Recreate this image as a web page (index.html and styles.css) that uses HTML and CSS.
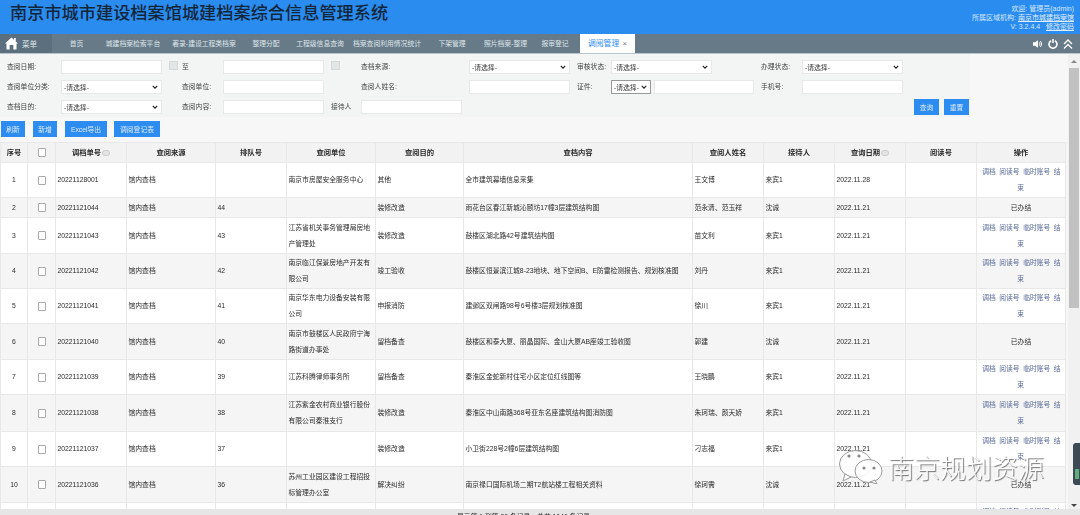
FILE: index.html
```html
<!DOCTYPE html>
<html lang="zh-CN">

<head>
    <meta charset="UTF-8">
    <title>南京市城市建设档案馆城建档案综合信息管理系统</title>
    <link rel="stylesheet" href="styles.css">
</head>

<body>
    <div class="app">
        <!-- Header -->
        <header class="header">
            <h1 class="title">南京市城市建设档案馆城建档案综合信息管理系统</h1>
            <div class="user-info">
                <div>欢迎: 管理员(admin)</div>
                <div>所属区域机构: <a href="#">南京市城建档案馆</a></div>
                <div>V: 3.2.4.4 &nbsp; <a href="#">修改密码</a></div>
            </div>
        </header>

        <!-- Navigation Bar -->
        <nav class="navbar">
            <div class="menu-btn">
                <svg class="home-icon" viewBox="0 0 14 14">
                    <path d="M7 0.5 L0 7 L1.6 7 L1.6 13.5 L5 13.5 L5 8.5 L9 8.5 L9 13.5 L12.4 13.5 L12.4 7 L14 7 L11.6 4.8 L11.6 1.2 L9.8 1.2 L9.8 3.1 Z" fill="#fff" />
                </svg>
                <span>菜单</span>
            </div>
            <ul class="tabs">
                <li>首页</li>
                <li>城建档案检索平台</li>
                <li>著录-建设工程类档案</li>
                <li>整理分配</li>
                <li>工程级信息查询</li>
                <li>档案查阅利用情况统计</li>
                <li>下架管理</li>
                <li>照片档案-整理</li>
                <li>报审登记</li>
                <li class="active">调阅管理 <span class="close">×</span></li>
            </ul>
            <div class="nav-icons">
                <svg viewBox="0 0 12 10">
                    <path d="M0 3 L2.5 3 L6 0.5 L6 9.5 L2.5 7 L0 7 Z" fill="#fff" />
                    <path d="M7.5 3 Q9.5 5 7.5 7 M9 1.5 Q12 5 9 8.5" fill="none" stroke="#fff" stroke-width="1.2" />
                </svg>
                <svg viewBox="0 0 10 10">
                    <path d="M3 1.8 A4 4 0 1 0 7 1.8" fill="none" stroke="#fff" stroke-width="1.6" />
                    <path d="M5 0 L5 4" stroke="#fff" stroke-width="1.6" />
                </svg>
                <svg viewBox="0 0 10 10">
                    <path d="M1 5 L5 1 L9 5 M1 9.5 L5 5.5 L9 9.5" fill="none" stroke="#fff" stroke-width="1.3" />
                </svg>
            </div>
        </nav>

        <div class="body-row">
            <div class="content">
                <!-- Search Form -->
                <form class="search-panel">
                    <div class="form-row">
                        <label class="lbl-first">查阅日期:</label>
                        <input type="text">
                        <span class="cal-slot"><i class="cal-icon"></i></span>
                        <label class="lbl-mid">至</label>
                        <input type="text">
                        <span class="cal-slot wide"><i class="cal-icon"></i></span>
                        <label class="lbl-wide">查档来源:</label>
                        <select><option>-请选择-</option></select>
                        <label class="lbl-mid pad">审核状态:</label>
                        <select><option>-请选择-</option></select>
                        <label class="lbl-last">办理状态:</label>
                        <select><option>-请选择-</option></select>
                    </div>

                    <div class="form-row">
                        <label class="lbl-first">查阅单位分类:</label>
                        <select><option>-请选择-</option></select>
                        <span class="cal-slot"></span>
                        <label class="lbl-mid">查阅单位:</label>
                        <input type="text">
                        <span class="cal-slot wide"></span>
                        <label class="lbl-wide">查阅人姓名:</label>
                        <input type="text">
                        <label class="lbl-mid pad">证件:</label>
                        <div class="id-field">
                            <select class="id-type"><option>-请选择-</option></select>
                            <input type="text">
                        </div>
                        <label class="lbl-phone">手机号:</label>
                        <input type="text">
                    </div>

                    <div class="form-row">
                        <label class="lbl-first">查档目的:</label>
                        <select><option>-请选择-</option></select>
                        <span class="cal-slot"></span>
                        <label class="lbl-mid">查阅内容:</label>
                        <input type="text">
                        <label class="lbl-reception">接待人</label>
                        <input type="text">
                        <div class="search-btns">
                            <button type="button" class="btn">查询</button>
                            <button type="button" class="btn">重置</button>
                        </div>
                    </div>
                </form>

                <div class="toolbar">
                    <button type="button" class="btn">刷新</button>
                    <button type="button" class="btn">新增</button>
                    <button type="button" class="btn">Excel导出</button>
                    <button type="button" class="btn">调阅登记表</button>
                </div>

                <!-- Data Table -->
                <table class="data-table">
                    <colgroup>
                        <col class="w27"><col class="w28"><col class="w71"><col class="w89"><col class="w71"><col class="w89"><col class="w88"><col class="w229"><col class="w71"><col class="w71"><col class="w71"><col class="w71"><col class="w89">
                    </colgroup>
                    <thead>
                        <tr>
                            <th>序号</th>
                            <th><input type="checkbox"></th>
                            <th>调档单号<span class="sort"></span></th>
                            <th>查阅来源</th>
                            <th>排队号</th>
                            <th>查阅单位</th>
                            <th>查阅目的</th>
                            <th>查档内容</th>
                            <th>查阅人姓名</th>
                            <th>接待人</th>
                            <th>查询日期<span class="sort"></span></th>
                            <th>阅读号</th>
                            <th>操作</th>
                        </tr>
                    </thead>
                    <tbody>
                        <tr class="h35">
                            <td class="num">1</td><td class="num"><input type="checkbox"></td><td>20221128001</td><td>馆内查档</td><td></td><td>南京市房屋安全服务中心</td><td>其他</td><td>全市建筑幕墙信息采集</td><td>王文博</td><td>来宾1</td><td>2022.11.28</td><td></td>
                            <td class="ops"><a href="#">调档</a> <a href="#">阅读号</a> <a href="#">临时账号</a> <a href="#">结束</a></td>
                        </tr>
                        <tr class="h20">
                            <td class="num">2</td><td class="num"><input type="checkbox"></td><td>20221121044</td><td>馆内查档</td><td>44</td><td></td><td>装修改造</td><td>雨花台区春江新城沁颐坊17幢3层建筑结构图</td><td>范永清、范玉祥</td><td>沈诚</td><td>2022.11.21</td><td></td>
                            <td class="ops">已办结</td>
                        </tr>
                        <tr class="h36">
                            <td class="num">3</td><td class="num"><input type="checkbox"></td><td>20221121043</td><td>馆内查档</td><td>43</td><td>江苏省机关事务管理局房地产管理处</td><td>装修改造</td><td>鼓楼区湖北路42号建筑结构图</td><td>苗文利</td><td>来宾1</td><td>2022.11.21</td><td></td>
                            <td class="ops"><a href="#">调档</a> <a href="#">阅读号</a> <a href="#">临时账号</a> <a href="#">结束</a></td>
                        </tr>
                        <tr class="h35">
                            <td class="num">4</td><td class="num"><input type="checkbox"></td><td>20221121042</td><td>馆内查档</td><td>42</td><td>南京临江保景房地产开发有限公司</td><td>竣工验收</td><td>鼓楼区恒景滨江城8-23地块、地下空间B、E防雷检测报告、规划核准图</td><td>刘丹</td><td>来宾1</td><td>2022.11.21</td><td></td>
                            <td class="ops"><a href="#">调档</a> <a href="#">阅读号</a> <a href="#">临时账号</a> <a href="#">结束</a></td>
                        </tr>
                        <tr class="h35">
                            <td class="num">5</td><td class="num"><input type="checkbox"></td><td>20221121041</td><td>馆内查档</td><td>41</td><td>南京华东电力设备安装有限公司</td><td>申报消防</td><td>建邺区双闸路98号6号楼3层规划核准图</td><td>徐川</td><td>来宾1</td><td>2022.11.21</td><td></td>
                            <td class="ops"><a href="#">调档</a> <a href="#">阅读号</a> <a href="#">临时账号</a> <a href="#">结束</a></td>
                        </tr>
                        <tr class="h36">
                            <td class="num">6</td><td class="num"><input type="checkbox"></td><td>20221121040</td><td>馆内查档</td><td>40</td><td>南京市鼓楼区人民政府宁海路街道办事处</td><td>留档备查</td><td>鼓楼区和泰大厦、丽晶国际、金山大厦AB座竣工验收图</td><td>郭建</td><td>沈诚</td><td>2022.11.21</td><td></td>
                            <td class="ops">已办结</td>
                        </tr>
                        <tr class="h35">
                            <td class="num">7</td><td class="num"><input type="checkbox"></td><td>20221121039</td><td>馆内查档</td><td>39</td><td>江苏科腾律师事务所</td><td>留档备查</td><td>秦淮区金蛇新村住宅小区定位红线图等</td><td>王晓鹏</td><td>来宾1</td><td>2022.11.21</td><td></td>
                            <td class="ops"><a href="#">调档</a> <a href="#">阅读号</a> <a href="#">临时账号</a> <a href="#">结束</a></td>
                        </tr>
                        <tr class="h37">
                            <td class="num">8</td><td class="num"><input type="checkbox"></td><td>20221121038</td><td>馆内查档</td><td>38</td><td>江苏紫金农村商业银行股份有限公司秦淮支行</td><td>装修改造</td><td>秦淮区中山南路368号亚东名座建筑结构图消防图</td><td>朱珂瑞、颜天娇</td><td>来宾1</td><td>2022.11.21</td><td></td>
                            <td class="ops"><a href="#">调档</a> <a href="#">阅读号</a> <a href="#">临时账号</a> <a href="#">结束</a></td>
                        </tr>
                        <tr class="h35">
                            <td class="num">9</td><td class="num"><input type="checkbox"></td><td>20221121037</td><td>馆内查档</td><td>37</td><td></td><td>装修改造</td><td>小卫街228号2幢6层建筑结构图</td><td>刁志福</td><td>来宾1</td><td>2022.11.21</td><td></td>
                            <td class="ops"><a href="#">调档</a> <a href="#">阅读号</a> <a href="#">临时账号</a> <a href="#">结束</a></td>
                        </tr>
                        <tr class="h36">
                            <td class="num">10</td><td class="num"><input type="checkbox"></td><td>20221121036</td><td>馆内查档</td><td>36</td><td>苏州工业园区建设工程招投标管理办公室</td><td>解决纠纷</td><td>南京禄口国际机场二期T2航站楼工程相关资料</td><td>徐珂需</td><td>沈诚</td><td>2022.11.21</td><td></td>
                            <td class="ops">已办结</td>
                        </tr>
                        <tr class="h35">
                            <td class="num">11</td><td class="num"><input type="checkbox"></td><td>20221121035</td><td>馆内查档</td><td>35</td><td></td><td>装修改造</td><td>秦淮区中山南路368号建筑结构图、消防图、规划核准图及相关资料</td><td>李明</td><td>来宾1</td><td>2022.11.21</td><td></td>
                            <td class="ops"><a href="#">调档</a> <a href="#">阅读号</a> <a href="#">临时账号</a> <a href="#">结束</a></td>
                        </tr>
                    </tbody>
                </table>
            </div>

            <!-- Scrollbar -->
            <div class="scrollbar">
                <span class="arrow-up"></span>
                <span class="thumb"></span>
                <span class="arrow-down"></span>
            </div>
        </div>

        <div class="footer">显示第 1 到第 20 条记录，总共 1046 条记录</div>
    </div>

    <!-- Overlays -->
    <div class="side-widget"><span></span></div>
    <div class="watermark">
        <svg class="wechat" viewBox="0 0 44 34">
            <ellipse cx="16.5" cy="14" rx="16" ry="13.5" fill="#fff" fill-opacity="0.8" stroke="#999" />
            <path d="M6 24 L4 31 L12 27 Z" fill="#fff" stroke="#999" />
            <ellipse cx="29.5" cy="21" rx="13.5" ry="11.5" fill="#fff" fill-opacity="0.9" stroke="#999" />
            <path d="M36 30 L38 34 L31 32 Z" fill="#fff" stroke="#999" />
            <circle cx="10" cy="6" r="1.6" fill="#888" />
            <circle cx="20" cy="6" r="1.6" fill="#888" />
            <circle cx="25" cy="18" r="1.6" fill="#888" />
            <circle cx="35" cy="18" r="1.6" fill="#888" />
        </svg>
        <span class="wm-text">南京规划资源</span>
    </div>
</body>

</html>
```

FILE: styles.css
```css
* {
    box-sizing: border-box;
}

html,
body {
    margin: 0;
    padding: 0;
    height: 100%;
    overflow: hidden;
}

body {
    font-family: "Liberation Sans", "Noto Sans CJK SC", sans-serif;
    font-size: 6.8px;
    color: #2a2a2a;
    background: #f7f7f7;
}

.app {
    display: flex;
    flex-direction: column;
    height: 100%;
    filter: blur(0.3px);
}

/* Header */
.header {
    flex: 0 0 34px;
    display: flex;
    justify-content: space-between;
    background-color: #2b8cf0;
    padding: 0 6px 0 10px;
}

.title {
    margin: 0;
    font-size: 17.2px;
    line-height: 26px;
    font-weight: 500;
    color: #12263a;
}

.user-info {
    padding-top: 4px;
    text-align: right;
    line-height: 9px;
    font-size: 7px;
    color: #d5e8fb;
}

.user-info a {
    color: #e4f0fc;
}

/* Navigation Bar */
.navbar {
    flex: 0 0 20px;
    display: flex;
    background-color: #677a88;
    border-bottom: 1px solid #b9c4cc;
    color: #dfe6ea;
}

.menu-btn {
    width: 52px;
    display: flex;
    align-items: center;
    gap: 4px;
    padding-left: 5px;
    background-color: #5c6f7e;
    font-size: 7.5px;
}

.home-icon {
    width: 13px;
    height: 13px;
}

.tabs {
    list-style: none;
    margin: 0;
    padding: 0;
    display: grid;
    grid-template-columns: 49px 64px 78px 46px 62px 72px 58px 49px 50px 55px;
}

.tabs li {
    text-align: center;
    line-height: 19px;
    white-space: nowrap;
}

.tabs li.active {
    background-color: #fff;
    color: #2b8cf0;
    font-size: 7.8px;
}

.tabs .close {
    color: #777;
    margin-left: 1px;
}

.nav-icons {
    margin-left: auto;
    display: flex;
    align-items: center;
    gap: 5px;
    padding-right: 7px;
}

.nav-icons svg {
    width: 10px;
    height: 10px;
}

/* Main Area */
.body-row {
    flex: 1;
    min-height: 0;
    display: flex;
}

.content {
    flex: 1;
    min-width: 0;
    overflow: hidden;
}

/* Search Form */
.search-panel {
    width: 970px;
    height: 63px;
    background-color: #f3f5f5;
    padding-top: 6px;
    display: flex;
    flex-direction: column;
    gap: 6px;
}

.form-row {
    display: flex;
    height: 14px;
}

.form-row label {
    flex: none;
    line-height: 14px;
    white-space: nowrap;
    color: #444;
}

.lbl-first {
    width: 61px;
    padding-left: 7px;
}

.lbl-mid {
    width: 41px;
}

.lbl-mid.pad {
    padding-left: 7px;
}

.lbl-wide {
    width: 108px;
}

.lbl-last {
    width: 90px;
    padding-left: 49px;
}

.lbl-phone {
    width: 41px;
}

.lbl-reception {
    width: 37px;
    padding-left: 7px;
}

.form-row input,
.form-row select {
    flex: 0 0 101px;
    width: 101px;
    height: 14px;
    margin: 0;
    padding: 0 0 0 2px;
    font: inherit;
    color: #333;
    background-color: #fff;
    border: 1px solid #e8e8e8;
    border-radius: 0;
}

.form-row select {
    appearance: none;
    background-image: url("data:image/svg+xml,%3Csvg xmlns='http://www.w3.org/2000/svg' viewBox='0 0 8 5'%3E%3Cpath d='M1 1 L4 4 L7 1' fill='none' stroke='%23222' stroke-width='1.6'/%3E%3C/svg%3E");
    background-repeat: no-repeat;
    background-position: right 3px center;
    background-size: 6px 4px;
}

.id-field {
    flex: 0 0 150px;
    display: flex;
    gap: 3px;
}

.form-row .id-type {
    flex: 0 0 40px;
    width: 40px;
    border-color: #999;
}

.form-row .id-field input {
    flex: 0 0 100px;
    width: 100px;
}

.cal-slot {
    flex: 0 0 20px;
}

.cal-slot.wide {
    flex-basis: 37px;
}

.cal-icon {
    display: block;
    width: 9px;
    height: 9px;
    margin: 1px 0 0 7px;
    background-color: #e3e6e6;
    border: 1px solid #d6d9d9;
}

.search-btns {
    margin-left: auto;
    display: flex;
    gap: 5px;
    height: 16px;
    margin-top: -1px;
    padding-right: 1px;
}

.btn {
    flex: none;
    height: 16px;
    padding: 0;
    font: inherit;
    color: #dcebfb;
    background-color: #2d8cf0;
    border: 0;
    white-space: nowrap;
}

.search-btns .btn {
    width: 25px;
}

/* Toolbar */
.toolbar {
    display: flex;
    gap: 8px;
    padding: 4px 0 5px 1px;
}

.toolbar .btn:nth-child(1),
.toolbar .btn:nth-child(2) {
    width: 24px;
}

.toolbar .btn:nth-child(3) {
    width: 42px;
}

.toolbar .btn:nth-child(4) {
    width: 46px;
    margin-left: -1px;
}

/* Data Table */
.data-table {
    width: 1065px;
    table-layout: fixed;
    border-collapse: collapse;
    background-color: #fff;
}

.w27 { width: 27px; }
.w28 { width: 28px; }
.w71 { width: 71px; }
.w88 { width: 88px; }
.w89 { width: 89px; }
.w229 { width: 229px; }

.data-table th,
.data-table td {
    border: 1px solid #e8e8e8;
    padding: 0 1.5px;
    line-height: 16px;
    font-weight: normal;
    overflow: hidden;
}

.data-table th {
    height: 20px;
    background-color: #f2f2f2;
    font-weight: bold;
    font-size: 7.3px;
    text-align: center;
}

.data-table tbody tr:nth-child(even) {
    background-color: #f5f5f5;
}

.h20 { height: 20px; }
.h35 { height: 35px; }
.h36 { height: 36px; }
.h37 { height: 37px; }

.data-table .num,
.data-table .ops {
    text-align: center;
}

.data-table .ops {
    padding: 0 2px;
}

.data-table .ops a {
    color: #5b6c9c;
    text-decoration: none;
    margin: 0 0.8px;
}

.data-table input[type="checkbox"] {
    appearance: none;
    display: block;
    width: 8px;
    height: 9px;
    margin: 0 auto;
    background-color: #fff;
    border: 1px solid #aaa;
    border-radius: 1px;
}

.sort {
    display: inline-block;
    width: 8px;
    height: 6px;
    margin-left: 1px;
    vertical-align: -1px;
    background-color: #e4e4e4;
    border: 1px solid #ccc;
    border-radius: 3px;
}

/* Scrollbar */
.scrollbar {
    flex: 0 0 12px;
    display: flex;
    flex-direction: column;
    align-items: center;
    background-color: #f1f1f1;
    padding: 6px 1px 0 0;
}

.arrow-up {
    border: 3px solid transparent;
    border-top: 0;
    border-bottom: 3px solid #888;
}

.thumb {
    width: 10px;
    height: 240px;
    margin-top: 5px;
    background-color: #c1c1c1;
}

.arrow-down {
    margin-top: auto;
    margin-bottom: 2px;
    border: 3px solid transparent;
    border-bottom: 0;
    border-top: 3px solid #444;
}

/* Footer */
.footer {
    flex: 0 0 6px;
    overflow: hidden;
    padding: 3px 490px 0 0;
    text-align: right;
    line-height: 9px;
    background-color: #e6e6e6;
}

/* Overlays */
.side-widget {
    position: absolute;
    left: 1073px;
    top: 443px;
    width: 7px;
    height: 42px;
    background-color: #3d4a55;
    border-radius: 3px 0 0 3px;
}

.side-widget span {
    display: block;
    width: 4px;
    height: 10px;
    margin: 26px 0 0 2px;
    background-color: #5fae7c;
}

.watermark {
    position: absolute;
    left: 839px;
    top: 450px;
    display: flex;
    gap: 5px;
}

.wechat {
    width: 44px;
    height: 34px;
}

.wm-text {
    font-family: "Noto Sans CJK SC", sans-serif;
    font-size: 26px;
    font-weight: 300;
    line-height: 34px;
    white-space: nowrap;
    color: rgba(255, 255, 255, 0.95);
    text-shadow: 1px 1px 1px rgba(0, 0, 0, 0.55);
}
```
